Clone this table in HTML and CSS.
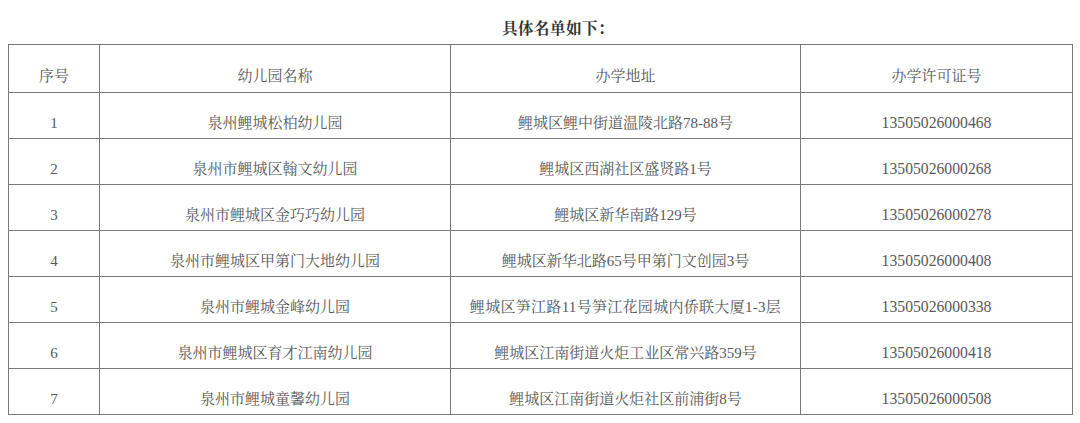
FILE: index.html
```html
<!DOCTYPE html>
<html lang="zh-CN">
<head>
<meta charset="utf-8">
<title>具体名单如下</title>
<link rel="stylesheet" href="styles.css">
</head>
<body>
<div class="page">
  <p class="title">具体名单如下：</p>
  <table class="list">
    <colgroup>
      <col class="c-no">
      <col class="c-name">
      <col class="c-addr">
      <col class="c-lic">
    </colgroup>
    <thead>
      <tr class="head-row"><th>序号</th><th>幼儿园名称</th><th>办学地址</th><th>办学许可证号</th></tr>
    </thead>
    <tbody>
      <tr><td>1</td><td>泉州鲤城松柏幼儿园</td><td>鲤城区鲤中街道温陵北路78-88号</td><td class="lic">13505026000468</td></tr>
      <tr><td>2</td><td>泉州市鲤城区翰文幼儿园</td><td>鲤城区西湖社区盛贤路1号</td><td class="lic">13505026000268</td></tr>
      <tr><td>3</td><td>泉州市鲤城区金巧巧幼儿园</td><td>鲤城区新华南路129号</td><td class="lic">13505026000278</td></tr>
      <tr><td>4</td><td>泉州市鲤城区甲第门大地幼儿园</td><td>鲤城区新华北路65号甲第门文创园3号</td><td class="lic">13505026000408</td></tr>
      <tr><td>5</td><td>泉州市鲤城金峰幼儿园</td><td class="wide">鲤城区笋江路11号笋江花园城内侨联大厦1-3层</td><td class="lic">13505026000338</td></tr>
      <tr><td>6</td><td>泉州市鲤城区育才江南幼儿园</td><td>鲤城区江南街道火炬工业区常兴路359号</td><td class="lic">13505026000418</td></tr>
      <tr><td>7</td><td>泉州市鲤城童馨幼儿园</td><td>鲤城区江南街道火炬社区前浦街8号</td><td class="lic">13505026000508</td></tr>
    </tbody>
  </table>
</div>
</body>
</html>
```

FILE: styles.css
```css
html, body {
  margin: 0;
  padding: 0;
  background: #ffffff;
}

.page {
  padding: 8px;
  font-family: "Liberation Serif", "Noto Serif CJK SC", "Noto Sans CJK SC", serif;
  color: #595959;
}

.title {
  margin: 0 0 3px 0;
  padding: 9px 0 0 36px;
  line-height: 24px;
  font-size: 15.5px;
  font-weight: bold;
  color: #333333;
  text-align: center;
  letter-spacing: 0.5px;
}

.list {
  width: 1064px;
  table-layout: fixed;
  border-collapse: collapse;
  font-size: 15px;
}

.c-no { width: 91px; }
.c-name { width: 351px; }
.c-addr { width: 350px; }
.c-lic { width: 272px; }

.list th,
.list td {
  border: 1px solid #7a7a7a;
  padding: 0 0 5px 0;
  height: 40px;
  line-height: 20px;
  text-align: center;
  vertical-align: bottom;
  font-weight: normal;
  white-space: nowrap;
}

.list td.lic {
  font-size: 15.7px;
}

.list td.wide {
  letter-spacing: 0.3px;
}

.head-row th {
  height: 41px;
  padding-bottom: 6px;
}
```
